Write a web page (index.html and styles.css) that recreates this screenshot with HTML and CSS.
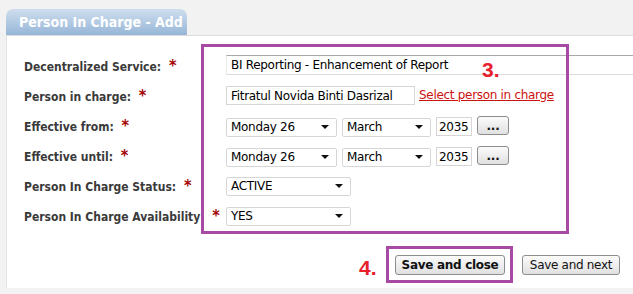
FILE: index.html
```html
<!DOCTYPE html>
<html lang="en">
<head>
<meta charset="UTF-8">
<title>Person In Charge - Add</title>
<link rel="stylesheet" href="styles.css">
</head>
<body>

<div class="tab">Person In Charge - Add</div>

<div class="panel">
    <div class="form">
        <div class="row">
            <label class="label">Decentralized Service: <span class="req">*</span></label>
            <input class="input-field wide" type="text" value="BI Reporting - Enhancement of Report">
        </div>
        <div class="row">
            <label class="label">Person in charge: <span class="req">*</span></label>
            <input class="input-field person" type="text" value="Fitratul Novida Binti Dasrizal">
            <a class="pick" href="#">Select person in charge</a>
        </div>
        <div class="row">
            <label class="label">Effective from: <span class="req">*</span></label>
            <span class="select day"><select><option>Monday 26</option></select></span>
            <span class="select month"><select><option>March</option></select></span>
            <input class="input-field year" type="text" value="2035">
            <button class="button dots">...</button>
        </div>
        <div class="row">
            <label class="label">Effective until: <span class="req">*</span></label>
            <span class="select day"><select><option>Monday 26</option></select></span>
            <span class="select month"><select><option>March</option></select></span>
            <input class="input-field year" type="text" value="2035">
            <button class="button dots">...</button>
        </div>
        <div class="row">
            <label class="label">Person In Charge Status: <span class="req">*</span></label>
            <span class="select status"><select><option>ACTIVE</option></select></span>
        </div>
        <div class="row">
            <label class="label">Person In Charge Availability: <span class="req">*</span></label>
            <span class="select status"><select><option>YES</option></select></span>
        </div>
    </div>

    <div class="actions">
        <button class="button save-close">Save and close</button>
        <button class="button save-next">Save and next</button>
    </div>

    <!-- annotation marks drawn over the form -->
    <div class="mark box-fields"></div>
    <div class="mark-num num-3">3.</div>
    <div class="mark box-save"></div>
    <div class="mark-num num-4">4.</div>
</div>

</body>
</html>
```

FILE: styles.css
```css
body {
    font-family: "DejaVu Sans", Verdana, sans-serif;
    background-color: #f2f2f2;
    color: #333333;
    margin: 0;
    padding: 9px 0 0 6px;
}

.tab {
    display: inline-block;
    width: 168px;
    height: 26px;
    padding-left: 13px;
    line-height: 27px;
    font-family: "DejaVu Sans Condensed", "DejaVu Sans", sans-serif;
    font-size: 14px;
    font-weight: bold;
    color: #ffffff;
    white-space: nowrap;
    border-radius: 7px 7px 0 0;
    background: linear-gradient(#cfdeee, #97b6d7);
    vertical-align: top;
}

.panel {
    position: relative;
    height: 252px;
    background-color: #ffffff;
    border-top: 1px solid #dddddd;
    border-left: 1px solid #e2e2e2;
}

.form {
    padding: 14px 0 0 17px;
}

.row {
    display: flex;
    align-items: center;
    height: 30px;
}

.label {
    width: 202px;
    flex: none;
    font-family: "DejaVu Sans Condensed", "DejaVu Sans", sans-serif;
    font-size: 12px;
    font-weight: bold;
    color: #3a3a3a;
    white-space: nowrap;
}

.req {
    color: #a30000;
    font-size: 16px;
    margin-left: 4px;
}

.input-field {
    box-sizing: border-box;
    height: 19px;
    padding: 0 4px;
    font-family: inherit;
    font-size: 12px;
    letter-spacing: -0.3px;
    color: #000000;
    border: 1px solid #dcdcdc;
    border-top-color: #a8a8a8;
    background: #ffffff;
    outline: none;
}

.wide {
    width: 420px;
    height: 20px;
    margin-top: -1px;
    border-left-color: #e8e8e8;
    border-right: none;
}

.person {
    width: 189px;
    height: 19px;
    margin-top: 1px;
    border-color: #d6d6d6;
    border-top-color: #d6d6d6;
}

.pick {
    margin-left: 4px;
    font-size: 12px;
    letter-spacing: -0.3px;
    color: #cc1111;
}

.select {
    position: relative;
    display: inline-block;
    margin-top: 3px;
    margin-right: 5px;
}

.select select {
    box-sizing: border-box;
    width: 100%;
    height: 19px;
    padding: 0 4px;
    font-family: inherit;
    font-size: 12px;
    letter-spacing: -0.3px;
    color: #000000;
    border: 1px solid #d6d6d6;
    border-radius: 2px;
    background: #ffffff;
    -webkit-appearance: none;
    appearance: none;
    outline: none;
}

.select::after {
    content: "";
    position: absolute;
    right: 8px;
    top: 9px;
    border-left: 4px solid transparent;
    border-right: 4px solid transparent;
    border-top: 4px solid #111111;
}

.day {
    width: 111px;
}

.month {
    width: 89px;
}

.status {
    width: 125px;
    margin-top: 1px;
}

.year {
    width: 36px;
    margin-top: 3px;
    padding: 0 2px;
    border-color: #d6d6d6;
}

.button {
    font-family: inherit;
    font-size: 12px;
    letter-spacing: -0.3px;
    color: #111111;
    height: 20px;
    padding: 0;
    white-space: nowrap;
    border: 1px solid #8d8d8d;
    border-radius: 3px;
    background: linear-gradient(#fbfbfb, #e0e0e0);
    cursor: pointer;
}

.dots {
    width: 32px;
    height: 19px;
    margin-left: 5px;
    margin-top: 1px;
    line-height: 10px;
    font-weight: bold;
}

.actions {
    display: flex;
    justify-content: flex-end;
    gap: 17px;
    padding: 25px 13px 0 0;
}

.save-close {
    width: 110px;
    font-weight: bold;
}

.save-next {
    width: 98px;
}

.mark {
    position: absolute;
    border: 3px solid #a64aa6;
}

.box-fields {
    left: 194px;
    top: 8px;
    width: 362px;
    height: 184px;
}

.box-save {
    left: 379px;
    top: 210px;
    width: 121px;
    height: 31px;
}

.mark-num {
    position: absolute;
    font-family: "Liberation Sans", Arial, sans-serif;
    font-size: 21px;
    font-weight: bold;
    color: #e8202b;
}

.num-3 {
    left: 475px;
    top: 22px;
}

.num-4 {
    left: 352px;
    top: 220px;
}
```
